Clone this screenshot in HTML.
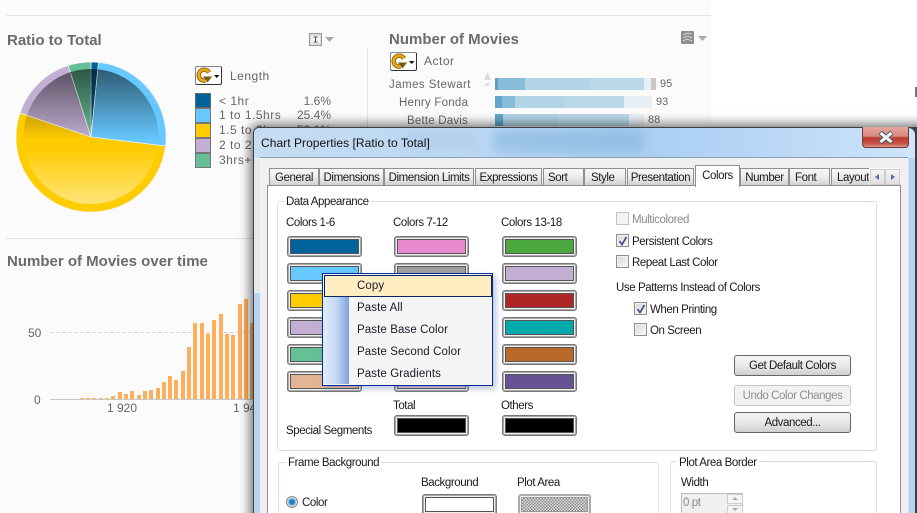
<!DOCTYPE html>
<html><head><meta charset="utf-8"><style>
html,body{margin:0;padding:0;background:#fff}
#p{position:relative;width:917px;height:513px;overflow:hidden;background:#fff;font-family:"Liberation Sans",sans-serif}
#p div,#p span,#p svg{position:absolute}
.t{line-height:14px;white-space:nowrap}
.c{font-size:12px;letter-spacing:.5px;color:#666}
.h{font-size:15px;font-weight:bold;color:#6b6b6b;letter-spacing:0;line-height:18px;white-space:nowrap}
.d{font-size:11.5px;color:#1a1a1a;letter-spacing:-.42px;margin-top:1px}
.tab{top:168px;height:16px;border:1px solid #8f8f8f;border-bottom:0;background:linear-gradient(#f8f8f8,#ececec 50%,#d2d2d2);font-size:11.5px;color:#1a1a1a;line-height:19px;text-align:center;letter-spacing:-.42px;white-space:nowrap;box-sizing:content-box}
.s{width:73px;height:19px;border:1px solid #777;border-radius:3px;background:#f1f1f1;box-shadow:inset 0 0 0 1px #aaa}
.s div{left:2px;top:2px;width:67px;height:13px;border:1px solid #555}
.g{border:1px solid #d5dfe8;border-radius:3px}
.gt{background:#fff;padding:0 2px}
.b{left:734px;width:115px;height:19px;border:1px solid #666;border-radius:3px;background:linear-gradient(#f4f4f4,#e8e8e8 50%,#cfcfcf);font-size:11.5px;line-height:21px;text-align:center;color:#1a1a1a;letter-spacing:-.42px}
.cb{width:11px;height:11px;border:1px solid #8e8f8f;background:linear-gradient(135deg,#d8d8d8,#f8f8f8);box-shadow:inset 0 0 0 1px #f2f2f2}
.m{left:357px;font-size:11.5px;color:#1a1a2a;letter-spacing:.1px;margin-top:1px}
</style></head><body><div id="p">
<div style="left:0;top:0;width:711px;height:513px;background:#fbfbfb"></div>
<div style="left:6px;top:15px;width:705px;height:1px;background:#e3e3e3"></div>
<div style="left:6px;top:238px;width:250px;height:1px;background:#e3e3e3"></div>
<div style="left:367px;top:47px;width:1px;height:85px;background:#e3e3e3"></div>
<div style="left:915px;top:87px;width:2px;height:10px;background:#777"></div>

<div class="h" style="left:7px;top:32px">Ratio to Total</div>
<svg style="left:0;top:0" width="360" height="240">
<defs><linearGradient id="sh" gradientUnits="userSpaceOnUse" x1="0" y1="69" x2="0" y2="204">
<stop offset="0" stop-color="#000" stop-opacity=".55"/><stop offset=".53" stop-color="#000" stop-opacity="0"/><stop offset=".62" stop-color="#fff" stop-opacity=".04"/><stop offset="1" stop-color="#fff" stop-opacity=".48"/></linearGradient></defs>
<g stroke="#f2f2f2" stroke-width=".7">
<path d="M91 137L91 62A75 75 0 0 1 98.5 62.4Z" fill="#00629a"/>
<path d="M91 137L98.5 62.4A75 75 0 0 1 165.5 146Z" fill="#66c8ff"/>
<path d="M91 137L165.5 146A75 75 0 1 1 20 113Z" fill="#ffcc00"/>
<path d="M91 137L20 113A75 75 0 0 1 68.2 65.5Z" fill="#c2afd3"/>
<path d="M91 137L68.2 65.5A75 75 0 0 1 91 62Z" fill="#66c096"/>
</g>
<circle cx="91" cy="136.500" r="67.500" fill="url(#sh)"/>
<path d="M91 137L27.500 115.500M91 137L70.600 73.200M91 137L157.500 145M91 137L97.700 70.300" stroke="#eee" stroke-width=".6" opacity=".7"/>
</svg>

<!-- cycle button 1 -->
<div style="left:195px;top:66px;width:25px;height:17px;border:1px solid #888;border-bottom-color:#333;border-right-color:#333;border-radius:2px;background:#fdfdfd"></div>
<svg style="left:196px;top:67px" width="26" height="17"><path d="M13 5.500A5.500 5.500 0 1 0 9.500 13.500" fill="none" stroke="#7a5a10" stroke-width="4.400"/><path d="M13 5.500A5.500 5.500 0 1 0 9.500 13.500" fill="none" stroke="#eaa90f" stroke-width="2.800"/><path d="M7 9.500h9l-4.500 6z" fill="#7a5a10"/><path d="M18 8h5.500l-2.750 3z" fill="#111"/></svg>
<div class="t c" style="left:230px;top:69px">Length</div>

<div style="left:195px;top:93px;width:16px;height:75px;outline:1px solid #777;outline-offset:-1px">
<div style="left:0;top:0;width:16px;height:15px;background:#00629a;border:1px solid #666;box-sizing:border-box"></div>
<div style="left:0;top:15px;width:16px;height:15px;background:#66c8ff;border:1px solid #777;box-sizing:border-box"></div>
<div style="left:0;top:30px;width:16px;height:15px;background:#ffcc00;border:1px solid #777;box-sizing:border-box"></div>
<div style="left:0;top:45px;width:16px;height:15px;background:#c2afd3;border:1px solid #777;box-sizing:border-box"></div>
<div style="left:0;top:60px;width:16px;height:15px;background:#66c096;border:1px solid #777;box-sizing:border-box"></div>
</div>
<div class="t c" style="left:219px;top:94px">&lt; 1hr</div><div class="t c" style="left:281px;top:94px;width:50px;text-align:right;letter-spacing:0">1.6%</div>
<div class="t c" style="left:219px;top:108px">1 to 1.5hrs</div><div class="t c" style="left:281px;top:108px;width:50px;text-align:right;letter-spacing:0">25.4%</div>
<div class="t c" style="left:219px;top:123px">1.5 to 2hrs</div><div class="t c" style="left:281px;top:123px;width:50px;text-align:right;letter-spacing:0">53.1%</div>
<div class="t c" style="left:219px;top:138px">2 to 2.5hrs</div>
<div class="t c" style="left:219px;top:153px">3hrs+</div>

<svg style="left:309px;top:33px" width="26" height="13"><rect x=".5" y=".5" width="12" height="12" fill="#ddd" stroke="#999"/><rect x="2" y="3" width="9" height="7" fill="#f4f4f4"/><path d="M4.500 4h4M6.500 4v5M4.500 9h4" stroke="#555" fill="none"/><path d="M16 4h9l-4.500 5z" fill="#aaa"/></svg>

<div class="h" style="left:389px;top:31px">Number of Movies</div>
<svg style="left:681px;top:31px" width="27" height="14"><rect x="0" y="0" width="13" height="13" rx="1" fill="#8c8c8c"/><path d="M2 4l5-2 4 1M2 7l5-2 4 2M2 10l4-2 5 2" stroke="#d4d4d4" fill="none"/><path d="M17 5h9l-4.500 5z" fill="#aaa"/></svg>
<div style="left:390px;top:52px;width:25px;height:17px;border:1px solid #888;border-bottom-color:#333;border-right-color:#333;border-radius:2px;background:#fdfdfd"></div>
<svg style="left:391px;top:53px" width="26" height="17"><path d="M13 5.500A5.500 5.500 0 1 0 9.500 13.500" fill="none" stroke="#7a5a10" stroke-width="4.400"/><path d="M13 5.500A5.500 5.500 0 1 0 9.500 13.500" fill="none" stroke="#eaa90f" stroke-width="2.800"/><path d="M7 9.500h9l-4.500 6z" fill="#7a5a10"/><path d="M18 8h5.500l-2.750 3z" fill="#111"/></svg>
<div class="t c" style="left:424px;top:54px">Actor</div>
<div class="t c" style="left:389px;top:78px;font-size:11.5px;letter-spacing:.45px">James Stewart</div>
<div class="t c" style="left:399px;top:96px;font-size:11.5px;letter-spacing:.25px">Henry Fonda</div>
<div class="t c" style="left:407px;top:114px;font-size:11.5px;letter-spacing:.2px">Bette Davis</div>
<svg style="left:483px;top:71px" width="10" height="18"><path d="M4.500 1L8 9H1z" fill="#dcdcdc"/><ellipse cx="4.500" cy="13.500" rx="2.500" ry="1.500" fill="#dcdcdc"/></svg>
<svg style="left:495px;top:78px" width="170" height="50">
<rect x="0" width="3" height="12" fill="#5f9fc6"/><rect x="3" width="27" height="12" fill="#88bbd8"/><rect x="30" width="65" height="12" fill="#b1d4e6"/><rect x="95" width="54" height="12" fill="#b9d8e9"/><rect x="149" width="7" height="12" fill="#e8f0f6"/><rect x="156" width="5" height="12" fill="#c8c8c8"/>
<rect x="0" y="18" width="7" height="12" fill="#63a5ca"/><rect x="7" y="18" width="13" height="12" fill="#88bbd8"/><rect x="20" y="18" width="49" height="12" fill="#b1d4e6"/><rect x="69" y="18" width="60" height="12" fill="#b9d8e9"/><rect x="129" y="18" width="28" height="12" fill="#e8f0f6"/>
<rect x="0" y="36" width="8" height="12" fill="#63a5ca"/><rect x="8" y="36" width="55" height="12" fill="#b1d4e6"/><rect x="63" y="36" width="71" height="12" fill="#b9d8e9"/><rect x="134" y="36" width="15" height="12" fill="#e8f0f6"/>
</svg>
<div class="t c" style="left:660px;top:77px;font-size:11px;letter-spacing:0">95</div>
<div class="t c" style="left:656px;top:95px;font-size:11px;letter-spacing:0">93</div>
<div class="t c" style="left:648px;top:113px;font-size:11px;letter-spacing:0">88</div>

<div class="h" style="left:7px;top:253px">Number of Movies over time</div>
<svg style="left:0;top:290px" width="260" height="125">
<path d="M50 42.500H253" stroke="#d8d8d8" stroke-dasharray="4 2"/>
<path d="M50 109.500H253" stroke="#c8c8c8"/>
<g fill="#ffae5c">
<rect x="80" y="108" width="4" height="1"/><rect x="86" y="108" width="4" height="1"/><rect x="92" y="108" width="4" height="1"/><rect x="99" y="108" width="4" height="1"/><rect x="105" y="108" width="4" height="1"/><rect x="111" y="106" width="4" height="3"/><rect x="118" y="102" width="4" height="7"/><rect x="124" y="104" width="4" height="5"/><rect x="130" y="101" width="4" height="8"/><rect x="137" y="105" width="4" height="4"/><rect x="143" y="101" width="4" height="8"/><rect x="149" y="100" width="4" height="9"/><rect x="156" y="98" width="4" height="11"/><rect x="162" y="92" width="4" height="17"/><rect x="168" y="86" width="4" height="23"/><rect x="174" y="90" width="4" height="19"/><rect x="181" y="81" width="4" height="28"/><rect x="187" y="57" width="4" height="52"/><rect x="193" y="33" width="4" height="76"/><rect x="200" y="33" width="4" height="76"/><rect x="206" y="44" width="4" height="65"/><rect x="212" y="30" width="4" height="79"/><rect x="219" y="24" width="4" height="85"/><rect x="225" y="44" width="4" height="65"/><rect x="231" y="45" width="4" height="64"/><rect x="238" y="14" width="4" height="95"/><rect x="244" y="9" width="4" height="100"/><rect x="250" y="33" width="4" height="76"/>
</g></svg>
<div class="t c" style="left:28px;top:326px;letter-spacing:0">50</div>
<div class="t c" style="left:34px;top:393px;letter-spacing:0">0</div>
<div class="t c" style="left:107px;top:401px;letter-spacing:0">1 920</div>
<div class="t c" style="left:233px;top:401px;letter-spacing:0">1 94</div>

<!-- DIALOG -->
<div style="left:253px;top:127px;width:680px;height:400px;background:#3c4046;border-radius:6px 8px 0 0;box-shadow:0 0 11px 3px rgba(0,0,0,.55);overflow:hidden">
 <div style="left:1px;top:1px;width:661px;height:390px;background:#d5e5f6;border-radius:5px 7px 0 0;overflow:hidden">
  <div style="left:0;top:0;width:661px;height:30px;background:linear-gradient(90deg,#c6dcf2 0,#bdd8f4 30%,#a9cdf0 55%,#b2d3f4 70%,#cfe4fa 100%)"></div>
  <div style="left:0;top:30px;width:6px;height:135px;background:#e6e8ea"></div>
  <div style="left:0;top:165px;width:6px;height:230px;background:#b9d4f0"></div>
  <div style="left:240px;top:2px;width:150px;height:22px;background:#7fb2d8;filter:blur(5px);opacity:.5"></div>
  <div style="left:150px;top:4px;width:70px;height:16px;background:#9cbfdc;filter:blur(6px);opacity:.35"></div>
  <div style="left:655px;top:30px;width:6px;height:360px;background:#b5d3f0"></div>
 </div>
</div>
<div class="t d" style="left:261px;top:136px;font-size:12px;letter-spacing:.05px;color:#111;margin-top:0">Chart Properties [Ratio to Total]</div>

<div style="left:862px;top:127px;width:45px;height:20px;border:1px solid #6d3a38;border-top:0;border-radius:0 0 4px 4px;background:linear-gradient(#e4a6a0,#d98a82 45%,#b93a2c 55%,#c9584a 85%,#dd9a92)"></div>
<svg style="left:878px;top:131px" width="16" height="13"><path d="M2 1.500L14 11.500M14 1.500L2 11.500" stroke="#4c5a70" stroke-width="5"/><path d="M2.500 2L13.500 11M13.500 2L2.500 11" stroke="#f4f6fa" stroke-width="3"/></svg>

<div style="left:260px;top:157px;width:648px;height:356px;background:#f0f0f0;border:0;border-top:1px solid #8aa0b4"></div>
<div style="left:267px;top:185px;width:632px;height:328px;background:#fff;border:1px solid #8f8f8f;border-bottom:0"></div>

<div class="tab" style="left:269px;width:48px">General</div>
<div class="tab" style="left:319px;width:63px">Dimensions</div>
<div class="tab" style="left:384px;width:88px">Dimension Limits</div>
<div class="tab" style="left:475px;width:65px">Expressions</div>
<div class="tab" style="left:543px;width:39px;text-align:left;text-indent:4px">Sort</div>
<div class="tab" style="left:584px;width:40px;text-align:left;text-indent:6px">Style</div>
<div class="tab" style="left:627px;width:65px">Presentation</div>
<div class="tab" style="left:695px;top:165px;width:43px;height:21px;background:#fff;line-height:21px;z-index:2">Colors</div>
<div class="tab" style="left:740px;width:47px">Number</div>
<div class="tab" style="left:789px;width:39px;text-align:left;text-indent:5px">Font</div>
<div class="tab" style="left:831px;width:40px;text-align:left;text-indent:5px">Layout</div>
<div style="left:869px;top:168px;width:31px;height:17px;background:#fff"></div>
<div style="left:870px;top:169px;width:13px;height:14px;border:1px solid #ccc;background:linear-gradient(#f5f5f5,#ddd)"></div>
<div style="left:885px;top:169px;width:13px;height:14px;border:1px solid #ccc;background:linear-gradient(#f5f5f5,#ddd)"></div>
<svg style="left:870px;top:169px" width="30" height="16"><path d="M9 5v6L5 8zM21 5v6l4-3z" fill="#5a6fa0"/></svg>

<div class="g" style="left:277px;top:201px;width:598px;height:248px"></div>
<div class="t d gt" style="left:284px;top:194px">Data Appearance</div>
<div class="t d" style="left:286px;top:215px">Colors 1-6</div>
<div class="t d" style="left:393px;top:215px">Colors 7-12</div>
<div class="t d" style="left:501px;top:215px">Colors 13-18</div>

<div class="s" style="left:287px;top:236px"><div style="background:#00629a"></div></div>
<div class="s" style="left:287px;top:263px"><div style="background:#66c8ff"></div></div>
<div class="s" style="left:287px;top:290px"><div style="background:#ffcc00"></div></div>
<div class="s" style="left:287px;top:317px"><div style="background:#c2afd3"></div></div>
<div class="s" style="left:287px;top:344px"><div style="background:#66c096"></div></div>
<div class="s" style="left:287px;top:371px"><div style="background:#e3b595"></div></div>
<div class="s" style="left:394px;top:236px"><div style="background:#e78ad0"></div></div>
<div class="s" style="left:394px;top:263px"><div style="background:#a0a0a0"></div></div>
<div class="s" style="left:394px;top:371px"><div style="background:#e6b5d8"></div></div>
<div class="s" style="left:502px;top:236px"><div style="background:#4ba83f"></div></div>
<div class="s" style="left:502px;top:263px"><div style="background:#c2afd3"></div></div>
<div class="s" style="left:502px;top:290px"><div style="background:#b02525"></div></div>
<div class="s" style="left:502px;top:317px"><div style="background:#00aaaa"></div></div>
<div class="s" style="left:502px;top:344px"><div style="background:#b96a2a"></div></div>
<div class="s" style="left:502px;top:371px"><div style="background:#685296"></div></div>
<div class="t d" style="left:393px;top:398px">Total</div>
<div class="t d" style="left:501px;top:398px">Others</div>
<div class="t d" style="left:286px;top:423px">Special Segments</div>
<div class="s" style="left:394px;top:415px"><div style="background:#000"></div></div>
<div class="s" style="left:502px;top:415px"><div style="background:#000"></div></div>

<div class="cb" style="left:616px;top:212px;border-color:#c4c4c4;background:#f4f4f4"></div>
<div class="t d" style="left:632px;top:212px;color:#8a8a8a">Multicolored</div>
<div class="cb" style="left:616px;top:234px"></div>
<svg style="left:617px;top:235px" width="12" height="12"><path d="M2.500 6L5 9.500 9.500 2" fill="none" stroke="#4a5a90" stroke-width="1.800"/></svg>
<div class="t d" style="left:632px;top:234px">Persistent Colors</div>
<div class="cb" style="left:616px;top:255px"></div>
<div class="t d" style="left:632px;top:255px">Repeat Last Color</div>
<div class="t d" style="left:616px;top:280px">Use Patterns Instead of Colors</div>
<div class="cb" style="left:634px;top:302px"></div>
<svg style="left:635px;top:303px" width="12" height="12"><path d="M2.500 6L5 9.500 9.500 2" fill="none" stroke="#4a5a90" stroke-width="1.800"/></svg>
<div class="t d" style="left:650px;top:302px">When Printing</div>
<div class="cb" style="left:634px;top:323px"></div>
<div class="t d" style="left:650px;top:323px">On Screen</div>

<div class="b" style="top:355px">Get Default Colors</div>
<div class="b" style="top:385px;border-color:#c4c4c4;background:#f2f2f2;color:#8f8f8f">Undo Color Changes</div>
<div class="b" style="top:412px">Advanced...</div>

<div class="g" style="left:278px;top:462px;width:379px;height:70px"></div>
<div class="t d gt" style="left:286px;top:455px">Frame Background</div>
<div class="t d" style="left:421px;top:475px">Background</div>
<div class="t d" style="left:517px;top:475px">Plot Area</div>
<div style="left:286px;top:496px;width:10px;height:10px;border:1px solid #888;border-radius:50%;background:radial-gradient(#1a7fc8 30%,#8fc0e0 50%,#eee 70%)"></div>
<div class="t d" style="left:302px;top:495px">Color</div>
<div class="s" style="left:422px;top:494px"><div style="background:#fff"></div></div>
<div class="s" style="left:518px;top:494px;border-color:#aaa;width:71px"><div style="width:65px;border-color:#999;background:repeating-conic-gradient(#8c8c8c 0 25%,#dcdcdc 0 50%) 0 0/3px 3px"></div></div>

<div class="g" style="left:670px;top:461px;width:205px;height:70px"></div>
<div class="t d gt" style="left:677px;top:455px">Plot Area Border</div>
<div class="t d" style="left:681px;top:475px">Width</div>
<div style="left:681px;top:493px;width:60px;height:20px;border:1px solid #bbb;background:#f0f0f0"></div>
<div class="t d" style="left:683px;top:495px;color:#8a8a8a">0 pt</div>
<div style="left:727px;top:494px;width:14px;height:8px;border:1px solid #ccc;background:#f4f4f4"></div>
<div style="left:727px;top:505px;width:14px;height:8px;border:1px solid #ccc;background:#f4f4f4"></div>
<svg style="left:727px;top:494px" width="16" height="19"><path d="M5 6l3-3 3 3zM5 14h6l-3 3z" fill="#aaa"/></svg>

<!-- context menu -->
<div style="left:322px;top:273px;width:169px;height:111px;border:1px solid #002d96;background:#f5f5f5;box-shadow:3px 3px 6px rgba(90,110,170,.4)"></div>
<div style="left:323px;top:296px;width:26px;height:88px;background:linear-gradient(90deg,#e3edfa,#c4d8f4 50%,#7ea2e0)"></div>
<div style="left:324px;top:275px;width:166px;height:20px;border:1px solid #0a246a;background:#ffeec2"></div>
<div class="t m" style="top:278px">Copy</div>
<div class="t m" style="top:300px">Paste All</div>
<div class="t m" style="top:322px">Paste Base Color</div>
<div class="t m" style="top:344px">Paste Second Color</div>
<div class="t m" style="top:366px">Paste Gradients</div>
</div></body></html>
